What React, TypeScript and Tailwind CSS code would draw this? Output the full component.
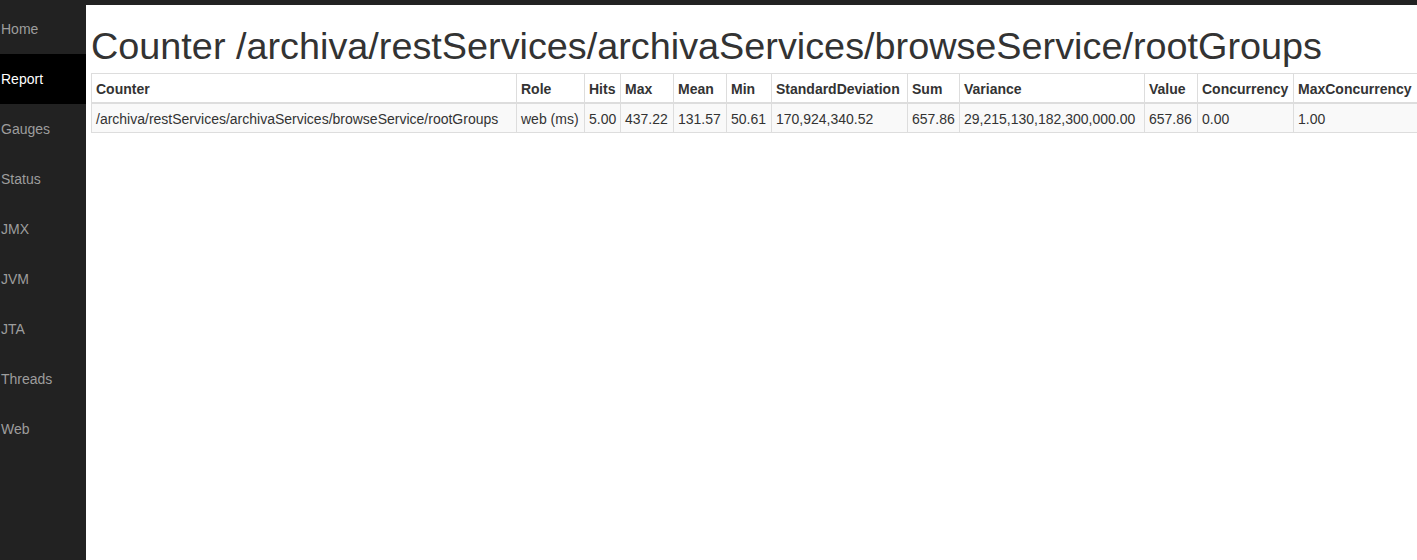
const navItems = ['Home', 'Report', 'Gauges', 'Status', 'JMX', 'JVM', 'JTA', 'Threads', 'Web']

const columns = [
  { label: 'Counter', width: 425 },
  { label: 'Role', width: 68 },
  { label: 'Hits', width: 36 },
  { label: 'Max', width: 53 },
  { label: 'Mean', width: 53 },
  { label: 'Min', width: 45 },
  { label: 'StandardDeviation', width: 136 },
  { label: 'Sum', width: 52 },
  { label: 'Variance', width: 185 },
  { label: 'Value', width: 53 },
  { label: 'Concurrency', width: 96 },
  { label: 'MaxConcurrency', width: 130 },
]

const row = [
  '/archiva/restServices/archivaServices/browseService/rootGroups',
  'web (ms)',
  '5.00',
  '437.22',
  '131.57',
  '50.61',
  '170,924,340.52',
  '657.86',
  '29,215,130,182,300,000.00',
  '657.86',
  '0.00',
  '1.00',
]

export default function App() {
  return (
    <div className="w-[1417px] h-[560px] overflow-hidden bg-[#222] pt-[5px] flex font-['Liberation_Sans',Arial,sans-serif] text-[14px] text-[#333]">
      <nav className="w-[86px] shrink-0 flex flex-col -mt-[1px]">
        {navItems.map((item) => (
          <div
            key={item}
            className={
              item === 'Report'
                ? 'h-[50px] flex items-center pl-[1px] bg-black text-white'
                : 'h-[50px] flex items-center pl-[1px] text-[#9d9d9d]'
            }
          >
            {item}
          </div>
        ))}
      </nav>

      <main className="flex-1 bg-white pl-[5px] min-w-0">
        <h1 className="mt-[21px] mb-[7px] text-[37.8px] leading-[40px] font-normal whitespace-nowrap">
          Counter /archiva/restServices/archivaServices/browseService/rootGroups
        </h1>

        <table className="table-fixed border-collapse border border-[#ddd] w-[1332px]">
          <colgroup>
            {columns.map((c) => (
              <col key={c.label} style={{ width: c.width }} />
            ))}
          </colgroup>
          <thead>
            <tr>
              {columns.map((c) => (
                <th
                  key={c.label}
                  className="border border-[#ddd] border-b-2 px-[4px] pt-[5px] pb-[3px] leading-[20px] text-left font-bold whitespace-nowrap"
                >
                  {c.label}
                </th>
              ))}
            </tr>
          </thead>
          <tbody>
            <tr className="bg-[#f9f9f9]">
              {row.map((v, i) => (
                <td
                  key={i}
                  className="border border-[#ddd] px-[4px] pt-[5px] pb-[3px] leading-[20px] whitespace-nowrap"
                >
                  {v}
                </td>
              ))}
            </tr>
          </tbody>
        </table>
      </main>
    </div>
  )
}
